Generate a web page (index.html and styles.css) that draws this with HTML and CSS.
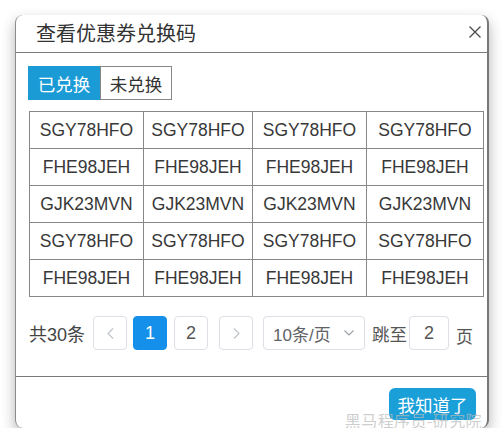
FILE: index.html
```html
<!DOCTYPE html>
<html lang="zh-CN">
<head>
<meta charset="utf-8">
<title>查看优惠券兑换码</title>
<link rel="stylesheet" href="styles.css">
</head>
<body>
<div class="modal">
  <div class="modal-header">
    <span class="modal-title">查看优惠券兑换码</span>
    <button class="close" aria-label="关闭">
      <svg width="12" height="12" viewBox="0 0 12 12"><path d="M0.5 0.5L11.5 11.5M11.5 0.5L0.5 11.5" stroke="#4a4a4a" stroke-width="1.3" fill="none"/></svg>
    </button>
  </div>
  <div class="modal-body">
    <div class="tabs">
      <button class="tab active">已兑换</button>
      <button class="tab">未兑换</button>
    </div>
    <table class="codes">
      <colgroup><col class="c1"><col class="c2"><col class="c3"><col class="c4"></colgroup>
      <tbody>
        <tr><td>SGY78HFO</td><td>SGY78HFO</td><td>SGY78HFO</td><td>SGY78HFO</td></tr>
        <tr><td>FHE98JEH</td><td>FHE98JEH</td><td>FHE98JEH</td><td>FHE98JEH</td></tr>
        <tr><td>GJK23MVN</td><td>GJK23MVN</td><td>GJK23MVN</td><td>GJK23MVN</td></tr>
        <tr><td>SGY78HFO</td><td>SGY78HFO</td><td>SGY78HFO</td><td>SGY78HFO</td></tr>
        <tr><td>FHE98JEH</td><td>FHE98JEH</td><td>FHE98JEH</td><td>FHE98JEH</td></tr>
      </tbody>
    </table>
    <div class="pager">
      <span class="total">共30条</span>
      <button class="pbtn prev" disabled>
        <svg width="7" height="11" viewBox="0 0 7 11"><path d="M6 0.5L1 5.5L6 10.5" stroke="#c0c4cc" stroke-width="1.2" fill="none"/></svg>
      </button>
      <button class="pbtn num active">1</button>
      <button class="pbtn num">2</button>
      <button class="pbtn next">
        <svg width="7" height="11" viewBox="0 0 7 11"><path d="M1 0.5L6 5.5L1 10.5" stroke="#c0c4cc" stroke-width="1.2" fill="none"/></svg>
      </button>
      <div class="size-select">
        <span>10条/页</span>
        <svg width="10" height="6" viewBox="0 0 10 6"><path d="M0.5 0.5L5 5L9.5 0.5" stroke="#9a9ea6" stroke-width="1.1" fill="none"/></svg>
      </div>
      <span class="jump">跳至</span>
      <div class="jump-input">2</div>
      <span class="page-unit">页</span>
    </div>
  </div>
  <div class="modal-footer">
    <button class="ok">我知道了</button>
  </div>
  <div class="watermark">黑马程序员-研究院</div>
</div>
</body>
</html>
```

FILE: styles.css
```css
* { box-sizing: border-box; }

html, body {
  margin: 0;
  background: #fff;
}

body {
  padding: 15px 0 0 15px;
  font-family: "Liberation Sans", "Noto Sans CJK SC", sans-serif;
  color: #333;
}

button {
  font-family: inherit;
  margin: 0;
}

.modal {
  position: relative;
  width: 474px;
  height: 413px;
  background: #fff;
  border-radius: 8px;
  border-left: 1px solid #8c8c8c;
  border-right: 2px solid #777;
  box-shadow: 0 6px 14px rgba(0, 0, 0, 0.3);
  display: flex;
  flex-direction: column;
}

.modal-header {
  height: 38px;
  border-bottom: 1px solid #7a7a7a;
  display: flex;
  align-items: center;
  justify-content: space-between;
  padding: 0 6px 0 20px;
}

.modal-title {
  font-size: 20px;
  line-height: 24px;
  color: #333;
}

.close {
  border: 0;
  background: none;
  padding: 0;
  width: 12px;
  height: 12px;
  display: flex;
  margin-top: -4px;
}

.modal-body {
  flex: 1;
  padding: 13px 4px 0 12px;
}

.tabs {
  display: flex;
}

.tab {
  height: 34px;
  width: 72px;
  padding: 0;
  font-size: 17.5px;
  color: #333;
  background: #fff;
  border: 1px solid #888;
}

.tab.active {
  background: #1b9bd6;
  border-color: #1b9bd6;
  color: #fff;
}

.codes {
  margin: 11px 0 0 1px;
  border-collapse: collapse;
  table-layout: fixed;
  width: 454px;
}

.codes .c1 { width: 114px; }
.codes .c2 { width: 109px; }
.codes .c3 { width: 114px; }
.codes .c4 { width: 117px; }

.codes td {
  border: 1px solid #888;
  height: 37px;
  padding: 0;
  text-align: center;
  font-size: 17.5px;
  color: #383838;
  white-space: nowrap;
}

.pager {
  display: flex;
  align-items: center;
  margin-top: 19px;
  margin-left: 1px;
  font-size: 18px;
  color: #444;
}

.total {
  margin-right: 8px;
}

.pbtn {
  width: 34px;
  height: 34px;
  border: 1px solid #dcdfe6;
  border-radius: 4px;
  background: #fff;
  padding: 0;
  display: flex;
  align-items: center;
  justify-content: center;
  font-size: 18px;
  color: #555;
}

.pbtn.num { margin-left: 6px; }
.pbtn.num + .pbtn.num { margin-left: 7px; }
.pbtn.next { margin-left: 11px; }

.pbtn.active {
  background: #1590ea;
  border-color: #1590ea;
  color: #fff;
}

.size-select {
  margin-left: 10px;
  width: 102px;
  height: 34px;
  border: 1px solid #dcdfe6;
  border-radius: 4px;
  display: flex;
  align-items: center;
  justify-content: space-between;
  padding: 0 10px 0 9px;
  font-size: 17px;
  color: #606266;
}

.jump {
  margin-left: 7px;
  font-size: 17.5px;
  color: #555;
}

.jump-input {
  margin-left: 2px;
  width: 40px;
  height: 34px;
  border: 1px solid #dcdfe6;
  border-radius: 4px;
  display: flex;
  align-items: center;
  justify-content: center;
  font-size: 18px;
  color: #555;
}

.page-unit {
  margin-left: 7px;
  margin-top: 5px;
  font-size: 17px;
  color: #555;
}

.modal-footer {
  height: 52px;
  border-top: 1px solid #7a7a7a;
  display: flex;
  justify-content: flex-end;
  align-items: flex-start;
  padding: 11px 11px 0 0;
}

.ok {
  height: 32px;
  width: 87px;
  border: 0;
  border-radius: 6px;
  background: #1b9fd9;
  color: #fff;
  font-size: 17.5px;
  padding: 0;
}

.watermark {
  position: absolute;
  right: 5px;
  bottom: -4px;
  font-size: 16px;
  letter-spacing: 0.4px;
  color: rgba(185, 185, 185, 0.7);
  font-family: "Noto Sans CJK SC", sans-serif;
  pointer-events: none;
}
```
